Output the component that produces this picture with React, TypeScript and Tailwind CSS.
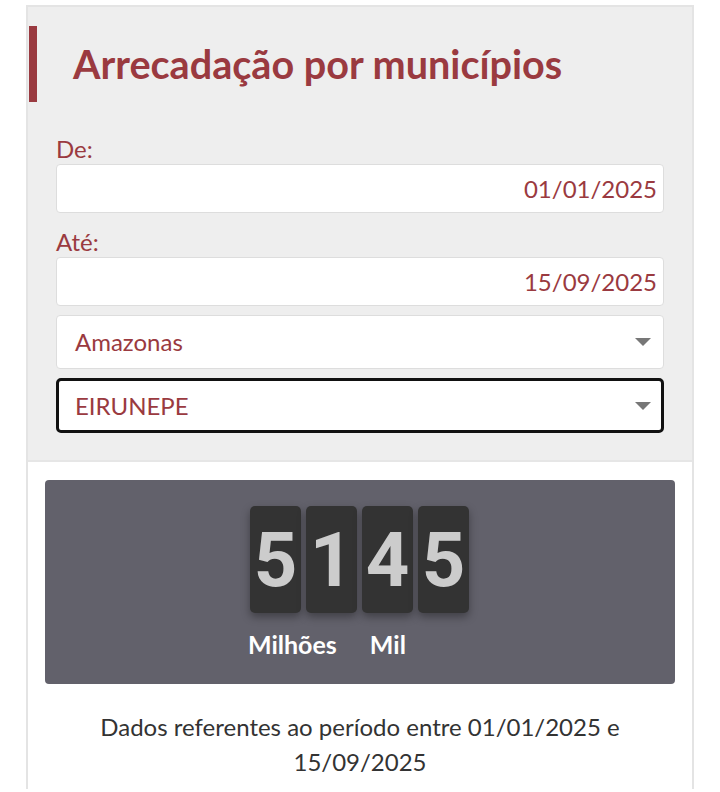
import type React from "react"

const digits = ["5", "1", "4", "5"]

const Arrow: React.FC = () => (
  <svg width="16" height="8" viewBox="0 0 16 8" className="shrink-0">
    <path d="M0 0 H16 L8 8 Z" fill="#777777" />
  </svg>
)

const DateField: React.FC<{ label: string; value: string; top: string }> = ({ label, value, top }) => (
  <div className={top}>
    <div className="h-[31px] text-[24px] leading-[31px] text-[#9a3a40]">{label}</div>
    <div className="flex h-[49px] items-center justify-end rounded-[4px] border border-[#dddddd] bg-white px-[6px] text-[24px] text-[#9a3a40]">
      {value}
    </div>
  </div>
)

export default function App() {
  return (
    <div className="min-h-screen bg-white pt-[5px]" style={{ fontFamily: "Lato, 'Open Sans', sans-serif" }}>
      <div className="ml-[26px] w-[668px] border-x-2 border-t-2 border-[#e4e4e4] pb-[10px]">
        {/* filtros */}
        <div className="border-b-2 border-[#e6e6e6] bg-[#eeeeee] pb-[27px] pt-[19px]">
          <div className="flex h-[76px] items-center">
            <div className="ml-px h-full w-2 bg-[#9a3a40]" />
            <h1 className="ml-[36px] text-[39.6px] font-bold leading-none text-[#9a3a40]">Arrecadação por municípios</h1>
          </div>
          <div className="px-[28px]">
            <DateField label="De:" value="01/01/2025" top="mt-[31px]" />
            <DateField label="Até:" value="15/09/2025" top="mt-[13px]" />
            <div className="mt-[9px] flex h-[54px] items-center justify-between rounded-[4px] border border-[#dddddd] bg-white pl-[18px] pr-[12px] text-[24px] text-[#9a3a40]">
              <span>Amazonas</span>
              <Arrow />
            </div>
            <div className="mt-[9px] flex h-[55px] items-center justify-between rounded-[5px] border-[3px] border-[#111111] bg-white pl-[16px] pr-[10px] text-[24px] text-[#9a3a40]">
              <span>EIRUNEPE</span>
              <Arrow />
            </div>
          </div>
        </div>

        {/* contador */}
        <div className="px-[17px] pt-[18px]">
          <div className="h-[204px] rounded-[4px] bg-[#62616b] pt-[26px]">
            <div className="mx-auto w-[220px]">
              <div className="flex gap-[5px]">
                {digits.map((d, i) => (
                  <div
                    key={i}
                    className="flex h-[107px] w-[51px] items-center justify-center rounded-[5px] bg-[#333333] text-[76px] font-bold leading-none text-[#cccccc] shadow-[0_4px_8px_rgba(0,0,0,0.35)]"
                    style={{ fontFamily: "Roboto, sans-serif" }}
                  >
                    {d}
                  </div>
                ))}
              </div>
              <div className="-ml-[2px] mt-[16px] flex text-[25px] font-bold leading-[30px] text-white">
                <span>Milhões</span>
                <span className="ml-[33px]">Mil</span>
              </div>
            </div>
          </div>
          <p className="mx-auto mt-[25px] w-[600px] text-center text-[24px] leading-[35px] text-[#333333]">
            Dados referentes ao período entre 01/01/2025 e 15/09/2025
          </p>
        </div>
      </div>
    </div>
  )
}
